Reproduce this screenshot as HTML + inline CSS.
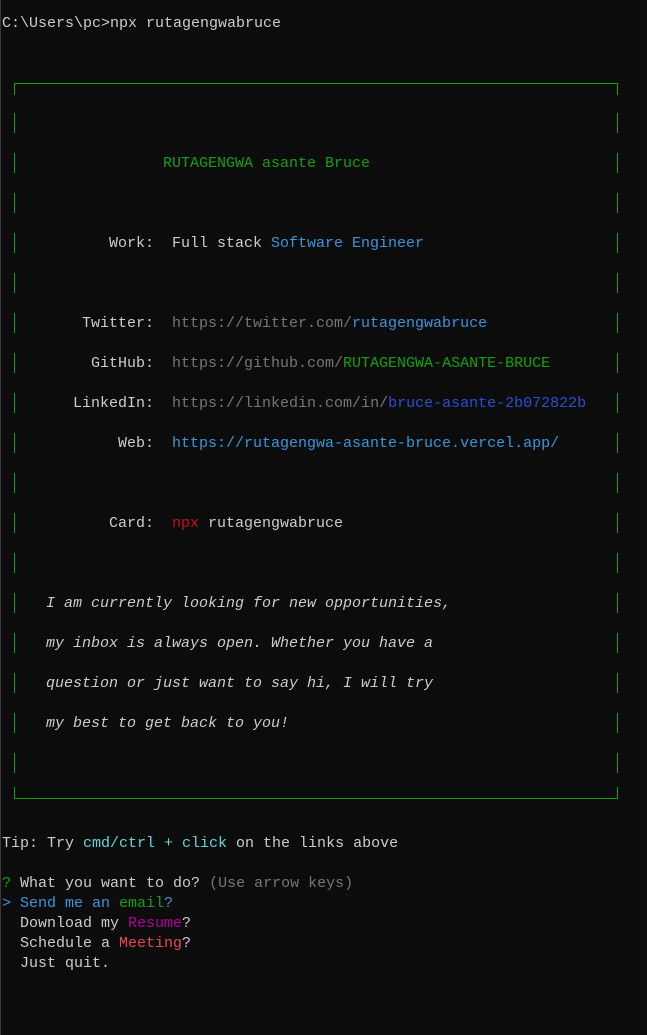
<!DOCTYPE html>
<html><head><meta charset="utf-8"><style>
body{margin:0;width:647px;height:1035px;background:#0c0c0c;overflow:hidden;position:relative;font-family:"Liberation Mono","DejaVu Sans Mono",monospace;font-size:15px;color:#cccccc}
.l{position:absolute;height:20px;line-height:22px;white-space:pre}
.g{color:#13a10e}.b{color:#3a96dd}.gr{color:#767676}.db{color:#2a4fd6}.r{color:#c50f1f}
.c{color:#61d6d6}.m{color:#b4009e}.br{color:#e74856}.it{font-style:italic}
.v{position:absolute;width:1px;height:20px;background:#13a10e}
.h{position:absolute;height:1px;background:#13a10e;left:14px;width:604px}
#edge{position:absolute;left:0;top:0;width:1px;height:1035px;background:#3a3a3a}
</style></head><body>
<div id="edge"></div>
<div class="l" style="left:2px;top:13px">C:\Users\pc&gt;npx rutagengwabruce</div>

<div class="h" style="top:83px"></div>
<div class="v" style="left:14px;top:83px;height:12px"></div>
<div class="v" style="left:617px;top:83px;height:12px"></div>
<div class="h" style="top:798px"></div>
<div class="v" style="left:14px;top:787px;height:12px"></div>
<div class="v" style="left:617px;top:787px;height:12px"></div>

<div class="v" style="left:14px;top:113px"></div><div class="v" style="left:617px;top:113px"></div>
<div class="v" style="left:14px;top:153px"></div><div class="v" style="left:617px;top:153px"></div>
<div class="v" style="left:14px;top:193px"></div><div class="v" style="left:617px;top:193px"></div>
<div class="v" style="left:14px;top:233px"></div><div class="v" style="left:617px;top:233px"></div>
<div class="v" style="left:14px;top:273px"></div><div class="v" style="left:617px;top:273px"></div>
<div class="v" style="left:14px;top:313px"></div><div class="v" style="left:617px;top:313px"></div>
<div class="v" style="left:14px;top:353px"></div><div class="v" style="left:617px;top:353px"></div>
<div class="v" style="left:14px;top:393px"></div><div class="v" style="left:617px;top:393px"></div>
<div class="v" style="left:14px;top:433px"></div><div class="v" style="left:617px;top:433px"></div>
<div class="v" style="left:14px;top:473px"></div><div class="v" style="left:617px;top:473px"></div>
<div class="v" style="left:14px;top:513px"></div><div class="v" style="left:617px;top:513px"></div>
<div class="v" style="left:14px;top:553px"></div><div class="v" style="left:617px;top:553px"></div>
<div class="v" style="left:14px;top:593px"></div><div class="v" style="left:617px;top:593px"></div>
<div class="v" style="left:14px;top:633px"></div><div class="v" style="left:617px;top:633px"></div>
<div class="v" style="left:14px;top:673px"></div><div class="v" style="left:617px;top:673px"></div>
<div class="v" style="left:14px;top:713px"></div><div class="v" style="left:617px;top:713px"></div>
<div class="v" style="left:14px;top:753px"></div><div class="v" style="left:617px;top:753px"></div>

<div class="l g" style="left:163px;top:153px">RUTAGENGWA asante Bruce</div>
<div class="l" style="left:109px;top:233px">Work:  Full stack <span class="b">Software Engineer</span></div>
<div class="l" style="left:82px;top:313px">Twitter:  <span class="gr">https://twitter.com/</span><span class="b">rutagengwabruce</span></div>
<div class="l" style="left:91px;top:353px">GitHub:  <span class="gr">https://github.com/</span><span class="g">RUTAGENGWA-ASANTE-BRUCE</span></div>
<div class="l" style="left:73px;top:393px">LinkedIn:  <span class="gr">https://linkedin.com/in/</span><span class="db">bruce-asante-2b072822b</span></div>
<div class="l" style="left:118px;top:433px">Web:  <span class="b">https://rutagengwa-asante-bruce.vercel.app/</span></div>
<div class="l" style="left:109px;top:513px">Card:  <span class="r">npx</span> rutagengwabruce</div>
<div class="l it" style="left:46px;top:593px">I am currently looking for new opportunities,</div>
<div class="l it" style="left:46px;top:633px">my inbox is always open. Whether you have a</div>
<div class="l it" style="left:46px;top:673px">question or just want to say hi, I will try</div>
<div class="l it" style="left:46px;top:713px">my best to get back to you!</div>

<div class="l" style="left:2px;top:833px">Tip: Try <span class="c">cmd/ctrl + click</span> on the links above</div>
<div class="l" style="left:2px;top:873px"><span class="g">?</span> What you want to do? <span class="gr">(Use arrow keys)</span></div>
<div class="l b" style="left:2px;top:893px">&gt; Send me an <span class="g">email</span>?</div>
<div class="l" style="left:2px;top:913px">  Download my <span class="m">Resume</span>?</div>
<div class="l" style="left:2px;top:933px">  Schedule a <span class="br">Meeting</span>?</div>
<div class="l" style="left:2px;top:953px">  Just quit.</div>
</body></html>
